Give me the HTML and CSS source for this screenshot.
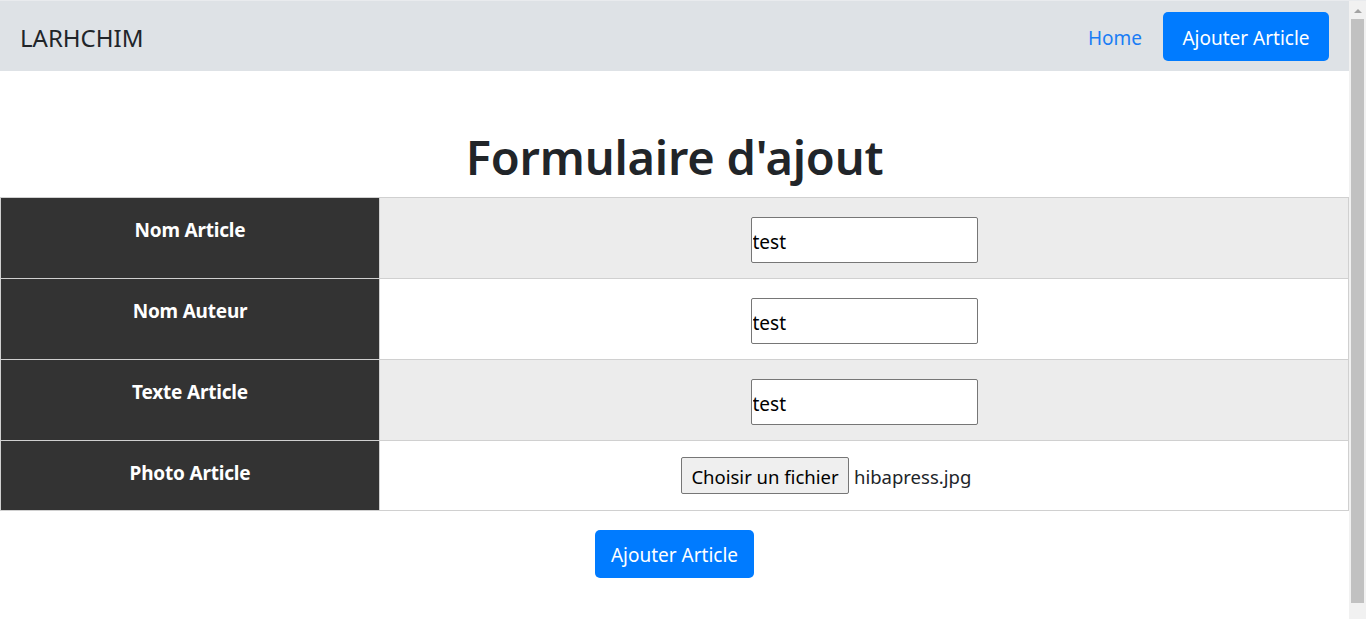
FILE: index.html
```html
<!DOCTYPE html>
<html lang="fr">
<head>
<meta charset="utf-8">
<title>Formulaire d'ajout</title>
<link rel="stylesheet" href="styles.css">
</head>
<body>
<nav class="navbar">
  <a class="brand" href="#">LARHCHIM</a>
  <div class="nav-right">
    <a class="nav-link" href="#">Home</a>
    <a class="btn btn-primary btn-nav" href="#">Ajouter Article</a>
  </div>
</nav>
<main class="content">
  <h1 class="title">Formulaire d'ajout</h1>
  <form class="form">
    <table class="form-table">
      <tr class="row-odd">
        <th>Nom Article</th>
        <td><input class="field" type="text" value="test"></td>
      </tr>
      <tr class="row-even">
        <th>Nom Auteur</th>
        <td><input class="field" type="text" value="test"></td>
      </tr>
      <tr class="row-odd">
        <th>Texte Article</th>
        <td><input class="field" type="text" value="test"></td>
      </tr>
      <tr class="row-even row-file">
        <th>Photo Article</th>
        <td><span class="file"><button type="button" class="file-btn">Choisir un fichier</button><span class="file-name">hibapress.jpg</span></span></td>
      </tr>
    </table>
    <div class="actions">
      <button type="button" class="btn btn-primary btn-submit">Ajouter Article</button>
    </div>
  </form>
</main>
<div class="scrollbar" aria-hidden="true">
  <div class="scroll-arrow"></div>
  <div class="scroll-thumb"></div>
</div>
</body>
</html>
```
FILE: styles.css
```css
html, body {
  margin: 0;
  padding: 0;
}
body {
  font-family: "Noto Sans", "Open Sans", sans-serif;
  color: #212529;
  background: #fff;
  padding-right: 17px;
  padding-bottom: 40px;
}
.scrollbar {
  position: fixed;
  top: 0;
  right: 0;
  bottom: 0;
  width: 17px;
  box-sizing: border-box;
  border-top: 1px solid #e9ebee;
  background: #f1f1f1;
  display: flex;
  flex-direction: column;
  align-items: center;
}
.scroll-arrow {
  margin-top: 8px;
  width: 0;
  height: 0;
  border-left: 4px solid transparent;
  border-right: 4px solid transparent;
  border-bottom: 4px solid #a3a3a3;
}
.scroll-thumb {
  margin-top: 6px;
  width: 13px;
  height: 584px;
  background: #c1c1c1;
}
.navbar {
  display: flex;
  align-items: center;
  justify-content: space-between;
  height: 70px;
  border-top: 1px solid #e9ebee;
  background: #dee2e6;
  padding: 0 20px 0 20px;
}
.brand {
  font-size: 24px;
  color: #212529;
  text-decoration: none;
  padding-top: 3px;
}
.nav-right {
  display: flex;
  align-items: center;
  gap: 21px;
}
.nav-link {
  font-size: 19px;
  color: #1a7df5;
  text-decoration: none;
  padding-top: 3px;
}
.btn {
  display: inline-flex;
  align-items: center;
  justify-content: center;
  box-sizing: border-box;
  border: none;
  border-radius: 5px;
  text-decoration: none;
  font-family: inherit;
  cursor: pointer;
}
.btn-primary {
  background: #007bff;
  color: #fff;
}
.btn-nav {
  width: 166px;
  height: 49px;
  font-size: 19px;
  padding-top: 3px;
  margin-top: 1px;
}
.title {
  margin: 0;
  padding-top: 57px;
  height: 69px;
  line-height: 58px;
  font-size: 47px;
  font-weight: 600;
  text-align: center;
  color: #212529;
  letter-spacing: -0.2px;
}
.form {
  margin: 0;
}
.form-table {
  width: 100%;
  border-collapse: collapse;
}
.form-table th,
.form-table td {
  border: 1px solid #d0d0d0;
  vertical-align: top;
  text-align: center;
  padding: 19px 0 15px;
}
.form-table th {
  width: 378px;
  background: #333;
  color: #fff;
  font-size: 19px;
  font-weight: 700;
  line-height: 26px;
  padding-top: 19px;
  letter-spacing: -0.2px;
}
.row-odd td {
  background: #ececec;
}
.row-even td {
  background: #fff;
}
.field {
  box-sizing: border-box;
  display: block;
  margin: 0 auto;
  width: 227px;
  height: 46px;
  border: 1px solid #767676;
  border-radius: 2px;
  padding: 3px 1px 0;
  font-family: inherit;
  font-size: 19px;
  color: #000;
  background: #fff;
}
.row-file td {
  padding: 16px 0 16px;
}
.file {
  display: inline-flex;
  align-items: center;
  gap: 5px;
  width: 366px;
}
.file-btn {
  box-sizing: border-box;
  height: 37px;
  width: 168px;
  border: 1px solid #767676;
  border-radius: 2px;
  background: #efefef;
  color: #000;
  font-family: inherit;
  font-size: 18.5px;
  padding: 2px 0 0;
}
.file-name {
  font-size: 18.5px;
  color: #212529;
  padding-top: 2px;
}
.actions {
  display: flex;
  justify-content: center;
  padding-top: 19px;
}
.btn-submit {
  width: 159px;
  height: 48px;
  font-size: 19px;
  padding-top: 2px;
}
```
